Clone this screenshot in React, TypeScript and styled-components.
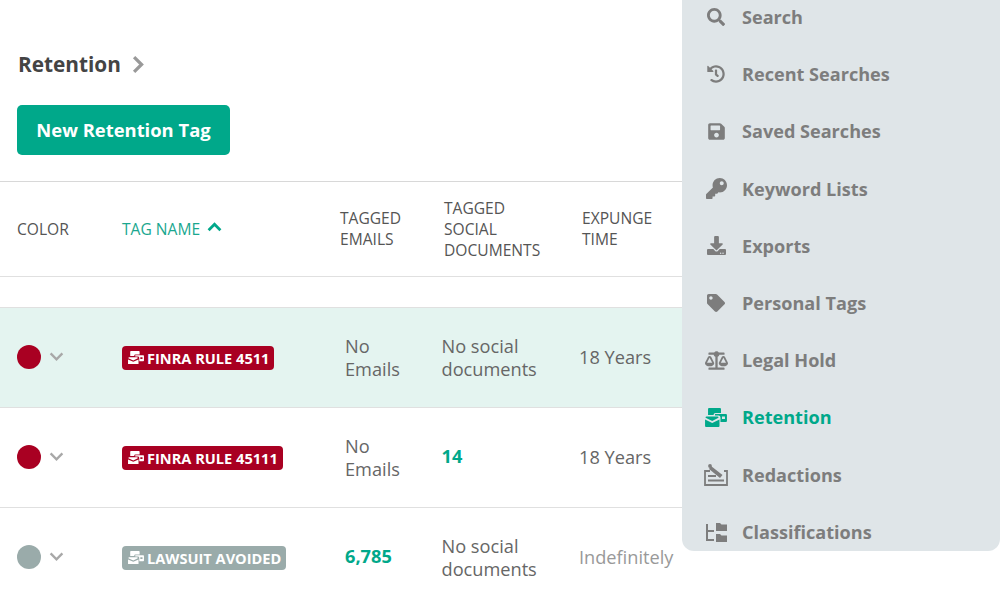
import React from "react";
import styled, { createGlobalStyle } from "styled-components";
import { FaSearch, FaHistory, FaSave, FaKey, FaDownload, FaTag, FaBalanceScale } from "react-icons/fa";

const Global = createGlobalStyle`
  html, body { margin: 0; padding: 0; height: 600px; overflow: hidden; background: #fff; }
  body { font-family: "Open Sans", "Liberation Sans", sans-serif; }
`;

const Page = styled.div`
  position: relative;
  width: 1000px;
  height: 600px;
  overflow: hidden;
`;
const Header = styled.div`
  display: flex;
  flex-direction: column;
  align-items: flex-start;
  padding: 49px 0 26px 17px;
  gap: 26px;
`;
const Crumb = styled.div`
  display: flex;
  align-items: center;
  gap: 9px;
  height: 30px;
  padding-left: 1px;
  font-size: 20.8px;
  font-weight: 700;
  color: #444;
  svg { color: #999; flex: none; }
`;
const NewButton = styled.button`
  width: 213px;
  height: 50px;
  border: 0;
  border-radius: 5px;
  background: #00a88a;
  color: #fff;
  font: 700 18.4px "Open Sans", sans-serif;
  padding: 0 0 2px;
`;
const Row = styled.div<{ $selected?: boolean }>`
  display: grid;
  grid-template-columns: 105px 223px 96.5px 137.5px 1fr;
  align-items: center;
  height: 99px;
  padding-left: 17px;
  border-bottom: 1px solid #e0e0e0;
  background: ${(p) => (p.$selected ? "#e4f4f0" : "#fff")};
  font-size: 18.2px;
  line-height: 23px;
  color: #666;
`;
const HeadRow = styled.div`
  display: grid;
  grid-template-columns: 105px 218px 104px 138px 1fr;
  align-items: center;
  height: 94px;
  padding-left: 17px;
  border-top: 1px solid #d8d8d8;
  border-bottom: 1px solid #e0e0e0;
  font-size: 15.6px;
  line-height: 21px;
  color: #555;
`;
const Spacer = styled.div`
  height: 30px;
  border-bottom: 1px solid #e0e0e0;
`;
const SortHead = styled.div`
  display: flex;
  align-items: center;
  gap: 7px;
  color: #1aa78f;
  svg { color: #00a88a; margin-top: -4px; flex: none; }
`;
const ColorCell = styled.div`
  display: flex;
  align-items: center;
  gap: 8px;
  margin-top: -2px;
  svg { color: #a8a8a8; flex: none; margin-top: -1px; }
`;
const Dot = styled.span<{ $color: string }>`
  width: 24px;
  height: 24px;
  border-radius: 50%;
  background: ${(p) => p.$color};
`;
const TagCell = styled.div``;
const Tag = styled.span<{ $color: string }>`
  display: inline-flex;
  align-items: center;
  gap: 3px;
  height: 24px;
  padding: 0 5px 0 6px;
  border-radius: 4px;
  background: ${(p) => p.$color};
  color: #fff;
  font-size: 14.6px;
  font-weight: 700;
  line-height: 24px;
  white-space: nowrap;
`;
const Cell = styled.div`
  color: #666;
  white-space: pre-line;
`;
const Single = styled.div<{ $muted?: boolean }>`
  margin-top: -1px;
  color: ${(p) => (p.$muted ? "#999" : "#666")};
`;
const Count = styled.div`
  margin-top: -2px;
  color: #00a88a;
  font-weight: 700;
`;
const Menu = styled.nav`
  position: absolute;
  top: 0;
  right: 0;
  width: 318px;
  height: 551px;
  background: #dfe5e8;
  border-radius: 0 0 12px 12px;
  overflow: hidden;
  display: flex;
  flex-direction: column;
`;
const MenuList = styled.div`
  display: flex;
  flex-direction: column;
  margin-top: -11.5px;
`;
const MenuItem = styled.div<{ $active?: boolean }>`
  display: flex;
  align-items: center;
  flex: none;
  height: 57.2px;
  padding-left: 22px;
  gap: 14px;
  font-size: 18.1px;
  font-weight: 700;
  color: ${(p) => (p.$active ? "#00a88a" : "#7d7d7d")};
`;
const IconBox = styled.span`
  width: 24px;
  height: 24px;
  display: flex;
  align-items: center;
  justify-content: center;
  flex: none;
`;

const Chevron = ({ dir, w, h, sw }: { dir: "up" | "down" | "right"; w: number; h: number; sw: number }) => {
  const d = dir === "up" ? "M1.5 8.5L7 3l5.5 5.5" : dir === "down" ? "M1.5 3L7 8.5 12.5 3" : "M3 1.5L8.5 7 3 12.5";
  const vb = dir === "right" ? "0 0 11 14" : "0 0 14 11";
  return (
    <svg width={w} height={h} viewBox={vb} fill="none" stroke="currentColor" strokeWidth={sw}>
      <path d={d} />
    </svg>
  );
};

const RetentionIcon = ({ size = 22 }: { size?: number }) => (
  <svg width={size} height={size * 0.86} viewBox="0 0 22 19" fill="currentColor">
    <path d="M4 0h11a1 1 0 0 1 1 1v4H10.500a2 2 0 0 0-2 2H3V1a1 1 0 0 1 1-1z" />
    <path fillRule="evenodd" d="M10 6h11a1 1 0 0 1 1 1v6a1 1 0 0 1-1 1h-5.500V9.500A2 2 0 0 0 13.500 7.500H10zm7 2.500v2.500h3V8.500z" />
    <path d="M1.500 8.500h11a1 1 0 0 1 1 1v.4L7.200 13 .5 9.900v-.4a1 1 0 0 1 1-1z" />
    <path d="M0 11.600l7.200 3.400 7.300-3.400V18a1 1 0 0 1-1 1H1a1 1 0 0 1-1-1z" />
  </svg>
);
const RedactionIcon = () => (
  <svg width="24" height="22" viewBox="0 0 24 22" fill="none" stroke="currentColor" strokeWidth="1.8">
    <path d="M6 7H1v14h22V7h-3" />
    <path d="M7 2l11.500 9-2.500 3L5 5z" fill="currentColor" stroke="none" />
    <circle cx="6" cy="2" r="1.900" fill="currentColor" stroke="none" />
    <path d="M4 12h8M4 16.500h16" />
  </svg>
);
const ClassIcon = () => (
  <svg width="22" height="20" viewBox="0 0 22 20" fill="currentColor">
    <path d="M1 2h2v6h6v2H3v7h6v2H1z" />
    <path d="M11 1h4l1.500 1.500H22V9H11z" />
    <path d="M11 12h4l1.500 1.500H22V20H11z" />
  </svg>
);

const items: { label: string; icon: React.ReactNode; active?: boolean }[] = [
  { label: "Search", icon: <FaSearch size={18} /> },
  { label: "Recent Searches", icon: <FaHistory size={18} /> },
  { label: "Saved Searches", icon: <FaSave size={19} /> },
  { label: "Keyword Lists", icon: <FaKey size={21} /> },
  { label: "Exports", icon: <FaDownload size={19} /> },
  { label: "Personal Tags", icon: <FaTag size={18} /> },
  { label: "Legal Hold", icon: <FaBalanceScale size={23} /> },
  { label: "Retention", icon: <RetentionIcon />, active: true },
  { label: "Redactions", icon: <RedactionIcon /> },
  { label: "Classifications", icon: <ClassIcon /> },
];

const RED = "#a90022";
const GREY = "#9aabaa";

const Down = () => <Chevron dir="down" w={15} h={12} sw={2.2} />;

export default function App() {
  return (
    <Page>
      <Global />
      <Header>
        <Crumb>Retention <Chevron dir="right" w={15} h={19} sw={2.4} /></Crumb>
        <NewButton>New Retention Tag</NewButton>
      </Header>
      <HeadRow>
        <div>COLOR</div>
        <SortHead>TAG NAME <Chevron dir="up" w={15} h={12} sw={2.6} /></SortHead>
        <div>TAGGED<br />EMAILS</div>
        <div>TAGGED<br />SOCIAL<br />DOCUMENTS</div>
        <div>EXPUNGE<br />TIME</div>
      </HeadRow>
      <Spacer />
      <Row $selected>
        <ColorCell><Dot $color={RED} /><Down /></ColorCell>
        <TagCell><Tag $color={RED}><RetentionIcon size={16} />FINRA RULE 4511</Tag></TagCell>
        <Cell>{"No\nEmails"}</Cell>
        <Cell>{"No social\ndocuments"}</Cell>
        <Single>18 Years</Single>
      </Row>
      <Row>
        <ColorCell><Dot $color={RED} /><Down /></ColorCell>
        <TagCell><Tag $color={RED}><RetentionIcon size={16} />FINRA RULE 45111</Tag></TagCell>
        <Cell>{"No\nEmails"}</Cell>
        <Count>14</Count>
        <Single>18 Years</Single>
      </Row>
      <Row>
        <ColorCell><Dot $color={GREY} /><Down /></ColorCell>
        <TagCell><Tag $color={GREY}><RetentionIcon size={16} />LAWSUIT AVOIDED</Tag></TagCell>
        <Count>6,785</Count>
        <Cell>{"No social\ndocuments"}</Cell>
        <Single $muted>Indefinitely</Single>
      </Row>
      <Menu>
        <MenuList>
          {items.map((it) => (
            <MenuItem key={it.label} $active={it.active}>
              <IconBox>{it.icon}</IconBox>
              {it.label}
            </MenuItem>
          ))}
        </MenuList>
      </Menu>
    </Page>
  );
}
